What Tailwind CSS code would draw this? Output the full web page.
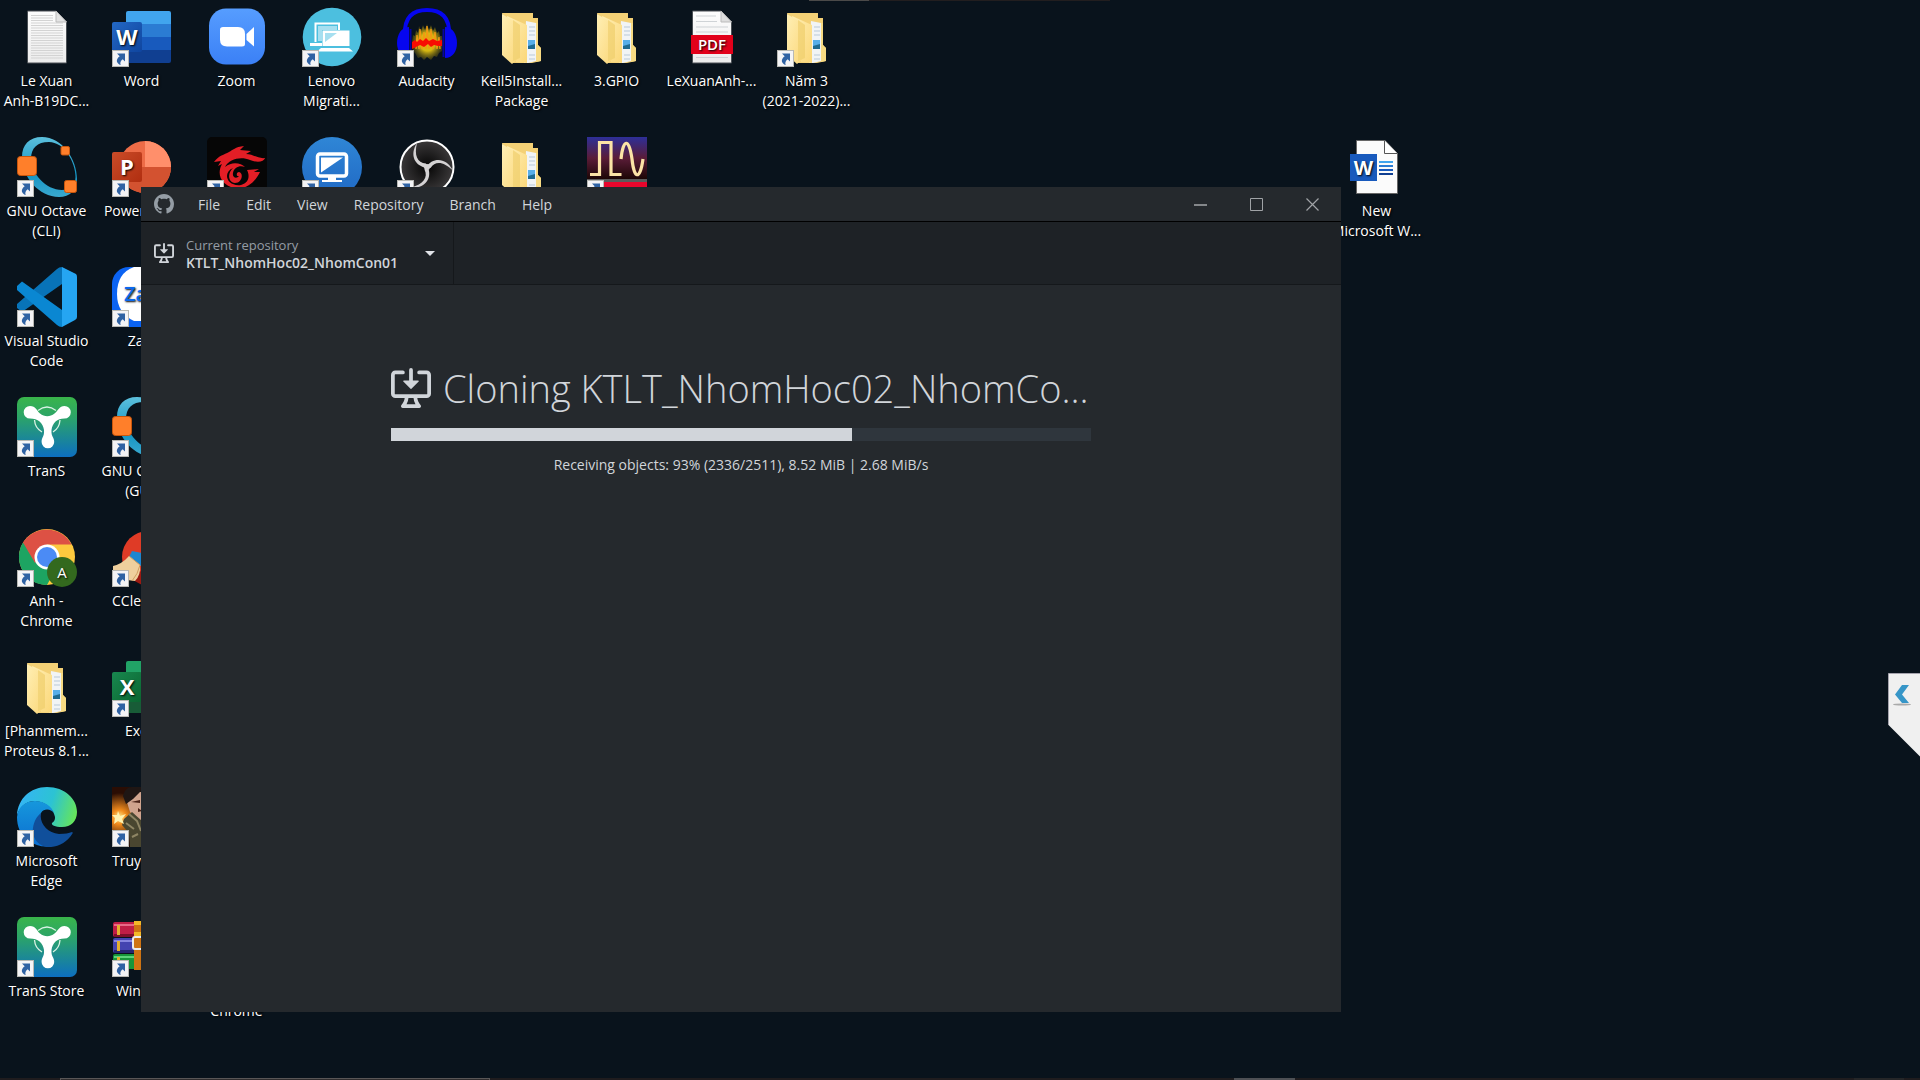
<!DOCTYPE html>
<html lang="en">
<head>
<meta charset="utf-8">
<meta name="viewport" content="width=device-width, initial-scale=1">
<title>Cloning KTLT_NhomHoc02_NhomCon01</title>
<script src="https://cdn.jsdelivr.net/npm/@tailwindcss/browser@4"></script>
</head>
<body class="relative h-screen overflow-hidden bg-[#09131c] font-['Open_Sans','Noto_Sans',sans-serif] text-sm">

<!-- Shared icon artwork -->
<svg class="absolute size-0" aria-hidden="true">
  <defs>
    <linearGradient id="gFold" x1="0" y1="0" x2="1" y2="1"><stop offset="0" stop-color="#ffefb5"/><stop offset="1" stop-color="#fbd778"/></linearGradient>
    <linearGradient id="gZoom" x1="0" y1="0" x2="0" y2="1"><stop offset="0" stop-color="#569dff"/><stop offset="1" stop-color="#3b80f6"/></linearGradient>
    <linearGradient id="gOct" x1="0" y1="0" x2="0" y2="1"><stop offset="0" stop-color="#5cc0dd"/><stop offset=".6" stop-color="#1494c3"/><stop offset="1" stop-color="#3aa9d0"/></linearGradient>
    <linearGradient id="gTran" x1="0" y1="0" x2="0" y2="1"><stop offset="0" stop-color="#39b54a"/><stop offset=".35" stop-color="#2ba36a"/><stop offset="1" stop-color="#0d6fc0"/></linearGradient>
    <linearGradient id="gWord" x1="0" y1="0" x2="1" y2="1"><stop offset="0" stop-color="#2368c4"/><stop offset="1" stop-color="#0f459f"/></linearGradient>
    <linearGradient id="gPpt" x1="0" y1="0" x2="1" y2="1"><stop offset="0" stop-color="#ca4c28"/><stop offset="1" stop-color="#b02e10"/></linearGradient>
    <linearGradient id="gXls" x1="0" y1="0" x2="1" y2="1"><stop offset="0" stop-color="#18884f"/><stop offset="1" stop-color="#0b6631"/></linearGradient>
    <linearGradient id="gSig" x1="0" y1="0" x2="0" y2="1"><stop offset="0" stop-color="#2e2f98"/><stop offset=".5" stop-color="#5a1c38"/><stop offset="1" stop-color="#1c0605"/></linearGradient>
    <linearGradient id="gBlue" x1="0" y1="0" x2="0" y2="1"><stop offset="0" stop-color="#2f86d6"/><stop offset="1" stop-color="#2069c4"/></linearGradient>
    <linearGradient id="gPage" x1="0" y1="0" x2="0" y2="1"><stop offset="0" stop-color="#fdfdfd"/><stop offset="1" stop-color="#ececec"/></linearGradient>
    <radialGradient id="gObs"><stop offset="0" stop-color="#050505"/><stop offset="1" stop-color="#3a3839"/></radialGradient>
    <radialGradient id="gAud"><stop offset=".5" stop-color="#d6b812"/><stop offset="1" stop-color="#5d5510" stop-opacity=".5"/></radialGradient>
    <linearGradient id="gEdgeT" x1="0" y1=".4" x2="1" y2=".6"><stop offset="0" stop-color="#35b4f5"/><stop offset=".55" stop-color="#2cc3d3"/><stop offset="1" stop-color="#66e55a"/></linearGradient>
    <linearGradient id="gEdgeB" x1="0" y1="0" x2="0" y2="1"><stop offset="0" stop-color="#1697dc"/><stop offset="1" stop-color="#0b6ed0"/></linearGradient>
    <radialGradient id="gFire" cx=".12" cy=".5" r=".4"><stop offset="0" stop-color="#ffe98a"/><stop offset=".3" stop-color="#f08a1c"/><stop offset="1" stop-color="#2a0d04"/></radialGradient>

    <symbol id="badge" viewBox="0 0 17 17">
      <rect x=".5" y=".5" width="16" height="16" fill="#f4f4f6" stroke="#b9b9b4"/>
      <path d="M5 3.500H13V11.500L10.700 9.200C8.500 11 7.800 12.600 8.700 15C4.700 13.500 3 9.700 7.700 6.200Z" fill="#2f62a3"/>
    </symbol>
    <symbol id="folder" viewBox="0 0 60 60">
      <path d="M10 6H41V11H46V38L49 41V54L40 56H20Z" fill="#f4d176"/>
      <path d="M34 14L44 16V54L36 56H32Z" fill="#f1f4f6"/>
      <path d="M37 20h6M37 24h6M37 28h6M37 48h6M37 52h6" stroke="#b9c9d8"/>
      <path d="M36 33h7v9h-7z" fill="#58aee8"/><path d="M36 39l7-2v5h-7z" fill="#1f6b91"/>
      <path d="M15 9L35 18V56L24 55Z" fill="url(#gFold)"/>
      <path d="M10 7L28 18V50L20 57L10 48Z" fill="url(#gFold)"/>
      <path d="M21 13L28 18V51L21 54Z" fill="#f0d070" opacity=".7"/>
      <path d="M44 16H46V38L49 41V54L44 55Z" fill="#f8db83"/>
    </symbol>
    <symbol id="octave" viewBox="0 0 60 60">
      <path fill="url(#gOct)" fill-rule="evenodd" d="M25 0C45 0 60 22 60 42C60 53 53 60 42 60C22 60 5 40 5 20C5 8 12 0 25 0ZM32 5C20 5 14 11 14 22C14 36 29 53 45 53C53 53 58.500 48 58.500 40C58.500 25 47 5 32 5Z"/>
      <g fill="#ff7f2a" stroke="#c9560c"><rect x=".5" y="19.500" width="19" height="19" rx="3"/><rect x="44" y="9.500" width="8.500" height="8.500" rx="1.500"/><rect x="47.500" y="43.500" width="12" height="12" rx="2"/></g>
    </symbol>
    <symbol id="trans" viewBox="0 0 60 60">
      <rect width="60" height="60" rx="7" fill="url(#gTran)"/>
      <path d="M21 13.500Q30 6.500 39 13.500M17.500 23Q18 31 25 35M43 23Q42.500 31 36 35" fill="none" stroke="#d9f2e4" stroke-width="1.300"/>
      <path d="M13 9C19 9 19 13 23 16.500C27.500 20 33 20 37.500 16.500C42 13 42 9 47.500 9A6.300 6.300 0 0 1 47.500 21.600C40 21.600 35.500 26 34.500 33C34 40 37.200 40 37.200 45A6.300 6.300 0 0 1 24.600 45C24.600 40 27.500 40 27 33C26 26 21 21.600 13 21.600A6.300 6.300 0 0 1 13 9Z" fill="#fff"/>
    </symbol>
    <symbol id="clone" viewBox="0 0 16 16">
      <path d="M4.927 5.427l2.896 2.896a.25.25 0 00.354 0l2.896-2.896A.25.25 0 0010.896 5H8.750V.750a.75.75 0 10-1.500 0V5H5.104a.25.25 0 00-.177.427z"/>
      <path d="M1.573 2.573a.25.25 0 00-.073.177v7.500a.25.25 0 00.25.25h12.500a.25.25 0 00.25-.25v-7.500a.25.25 0 00-.25-.25h-3a.75.75 0 110-1.500h3A1.750 1.750 0 0116 2.750v7.500A1.750 1.750 0 0114.250 12h-3.727c.099 1.041.52 1.872 1.292 2.757A.75.75 0 0111.250 16h-6.500a.75.75 0 01-.565-1.243c.772-.885 1.192-1.716 1.292-2.757H1.750A1.750 1.750 0 010 10.250v-7.500A1.750 1.750 0 011.750 1h3a.75.75 0 010 1.500h-3a.25.25 0 00-.177.073zM6.982 12a5.720 5.720 0 01-.765 2.500h3.566a5.720 5.720 0 01-.765-2.500H6.982z"/>
    </symbol>
  </defs>
</svg>

<!-- Desktop shortcuts -->
<main class="-ml-px grid auto-rows-[130px] grid-cols-[repeat(auto-fill,95px)] pt-[7px] text-center leading-5 text-white [text-shadow:1px_1px_2px_#000]">
  <a href="#" class="col-start-1 row-start-1 flex flex-col items-center gap-1">
    <svg class="size-15" viewBox="0 0 60 60"><path d="M10.500 4H39L49.500 14.500V56H10.500Z" fill="url(#gPage)" stroke="#4a4f54"/><path d="M14 8.500h22M14 11h22M14 13.500h22M14 16h32M14 18.500h32M14 21h32M14 23.500h32M14 26h32M14 28.500h32M14 31h32M14 33.500h32M14 36h32M14 38.500h32M14 41h32M14 43.500h32M14 46h32M14 48.500h32M14 51h32" stroke="#d3d3d3"/><path d="M39 4V15H49.500Z" fill="#e3e3e3" stroke="#bbb"/></svg>
    <span>Le Xuan<br>Anh-B19DC...</span></a>
  <a href="#" class="col-start-2 row-start-1 flex flex-col items-center gap-1">
    <svg class="size-15" viewBox="0 0 60 60"><path d="M14 17V6Q14 4 16 4H57Q59 4 59 6V17Z" fill="#41a5ee"/><path d="M14 17H59V30H14Z" fill="#2b7cd3"/><path d="M14 30H59V43H14Z" fill="#185abd"/><path d="M14 43H59V54Q59 56 57 56H14Z" fill="#103f91"/><rect y="15" width="30" height="30" rx="2" fill="url(#gWord)"/><text x="15" y="38" font-size="22" font-weight="700" text-anchor="middle" fill="#fff">W</text><use href="#badge" y="43" width="17" height="17"/></svg>
    <span>Word</span></a>
  <a href="#" class="col-start-3 row-start-1 flex flex-col items-center gap-1">
    <svg class="size-15" viewBox="0 0 60 60"><rect x="2" y="1.500" width="56" height="56" rx="17" fill="url(#gZoom)"/><path d="M13 22.500Q13 20 16 20H31Q38 20 38 27V37Q38 39.500 35 39.500H20Q13 39.500 13 32.500Z" fill="#fff"/><path d="M39.500 27L47 20V39.500L39.500 33Z" fill="#fff"/></svg>
    <span>Zoom</span></a>
  <a href="#" class="col-start-4 row-start-1 flex flex-col items-center gap-1">
    <svg class="size-15" viewBox="0 0 60 60"><circle cx="30" cy="30" r="29.300" fill="#4cbfdf"/><path d="M13.500 35V16.500H37V23" fill="none" stroke="#fff" stroke-width="2"/><path d="M16 19H35V23H20V34H16Z" fill="#a6dff0"/><path d="M8 36h12v3H8z" fill="#fff"/><path d="M20.500 23.500H47.500V39H20.500ZM19 41H47L51 44.500H15Z" fill="#fff"/><path d="M23 26H35L23 35Z" fill="#a6dff0"/><use href="#badge" y="43" width="17" height="17"/></svg>
    <span>Lenovo<br>Migrati...</span></a>
  <a href="#" class="col-start-5 row-start-1 flex flex-col items-center gap-1">
    <svg class="size-15" viewBox="0 0 60 60"><path d="M15 34L16 28L18 29L19 23L21 26L22 19L24 24L26 18L28 23L30 17L32 23L34 18L36 24L38 20L40 26L42 24L43 29L45 29L46 36L45 44L42 46L40 50L37 49L34 53L30 50L27 53L24 50L21 51L18 46L16 44Z" fill="url(#gAud)"/><path d="M19 42L20 28L22 42L23 22L25 42L27 25L29 42L30 19L32 42L34 22L36 42L38 25L40 42L42 30L43 42" stroke="#f29a12" stroke-width="1.300" fill="none"/><path d="M15 35L18 33L20 35L23 32L26 34L29 31L32 34L36 32L40 34L45 33V39L41 39L37 38L34 40L31 37L27 40L23 38L19 40L15 42Z" fill="#f80b02"/><path d="M8 28C7 10 16 3 30 3S53 10 52 28" fill="none" stroke="#0606ef" stroke-width="4"/><path d="M12 20C4 20 0 28 0 36S5 51 12 51ZM48 20C56 20 60 28 60 36S56 51 48 51Z" fill="#0606ef"/><path d="M13.500 22V50M46.500 22V50" stroke="#0505a0" stroke-width="2"/><use href="#badge" y="43" width="17" height="17"/></svg>
    <span>Audacity</span></a>
  <a href="#" class="col-start-6 row-start-1 flex flex-col items-center gap-1">
    <svg class="size-15"><use href="#folder"/></svg>
    <span>Keil5Install...<br>Package</span></a>
  <a href="#" class="col-start-7 row-start-1 flex flex-col items-center gap-1">
    <svg class="size-15"><use href="#folder"/></svg>
    <span>3.GPIO</span></a>
  <a href="#" class="col-start-8 row-start-1 flex flex-col items-center gap-1">
    <svg class="size-15" viewBox="0 0 60 60"><path d="M10.500 4H39L49.500 14.500V56H10.500Z" fill="url(#gPage)" stroke="#4a4f54"/><path d="M14 9h20M14 14.500h21M14 20h32M14 25h32M14 50.500h32" stroke="#cfd3d6"/><path d="M39 4V15H49.500Z" fill="#dedede" stroke="#bbb"/><path d="M9 28H51V47H9Z" fill="#e2001a"/><text x="30" y="43" font-size="15" font-weight="600" text-anchor="middle" fill="#fff">PDF</text></svg>
    <span>LeXuanAnh-...</span></a>
  <a href="#" class="col-start-9 row-start-1 flex flex-col items-center gap-1">
    <svg class="size-15" viewBox="0 0 60 60"><use href="#folder"/><use href="#badge" y="43" width="17" height="17"/></svg>
    <span>Năm 3<br>(2021-2022)...</span></a>

  <a href="#" class="col-start-1 row-start-2 flex flex-col items-center gap-1">
    <svg class="size-15" viewBox="0 0 60 60"><use href="#octave"/><use href="#badge" y="43" width="17" height="17"/></svg>
    <span>GNU Octave<br>(CLI)</span></a>
  <a href="#" class="col-start-2 row-start-2 flex flex-col items-center gap-1">
    <svg class="size-15" viewBox="0 0 60 60"><circle cx="33" cy="30" r="26" fill="#ed6c47"/><path d="M33 4A26 26 0 0 1 59 30H33Z" fill="#ff8f6b"/><path d="M7 30H59A26 26 0 0 1 7 30Z" fill="#d35230"/><rect y="15" width="30" height="30" rx="2" fill="url(#gPpt)"/><text x="15" y="38" font-size="22" font-weight="700" text-anchor="middle" fill="#fff">P</text><use href="#badge" y="43" width="17" height="17"/></svg>
    <span>PowerPoint</span></a>
  <a href="#" aria-label="Garena" class="col-start-3 row-start-2 flex flex-col items-center">
    <svg class="size-15" viewBox="0 0 60 60"><rect width="60" height="60" rx="5" fill="#060606"/><path d="M7 25C12 18 17 18 22 15C26 13 28 10 37 9L33 13L44 14L39 17C46 17 51 22 58 21C57 25 50 26 43 23C34 19 22 22 18 30C25 24 34 26 38 30C33 28 27 30 26 36C25 41 30 42 32 39C29 40 29 35 32 35C37 36 35 46 28 46C20 45 21 35 26 31C15 36 20 50 34 48C42 46 43 39 40 33L52 32L47 35L53 35C48 45 40 53 27 51C15 48 9 38 15 27L11 29L14 24Z" fill="#e31e26"/><use href="#badge" y="43" width="17" height="17"/></svg></a>
  <a href="#" aria-label="Remote desktop" class="col-start-4 row-start-2 flex flex-col items-center">
    <svg class="size-15" viewBox="0 0 60 60"><circle cx="30" cy="30" r="30" fill="url(#gBlue)"/><rect x="15.500" y="17" width="29" height="22" rx="2.500" fill="none" stroke="#fff" stroke-width="3.500"/><path d="M19 20.500H41L19 35.500Z" fill="#fff"/><path d="M26 40h8v3h6v2H20v-2h6z" fill="#fff"/><use href="#badge" y="43" width="17" height="17"/></svg></a>
  <a href="#" aria-label="OBS Studio" class="col-start-5 row-start-2 flex flex-col items-center">
    <svg class="size-15" viewBox="0 0 60 60"><circle cx="30" cy="30" r="26.500" fill="url(#gObs)" stroke="#fff" stroke-width="2"/><g fill="#d4d2d3"><path d="M20 6C17 18 20 26 29 26.500L31 31C18 30 12 18 20 6Z"/><path d="M20 6C17 18 20 26 29 26.500L31 31C18 30 12 18 20 6Z" transform="rotate(120 30 30)"/><path d="M20 6C17 18 20 26 29 26.500L31 31C18 30 12 18 20 6Z" transform="rotate(240 30 30)"/><circle cx="30" cy="30" r="3"/></g><use href="#badge" y="43" width="17" height="17"/></svg></a>
  <a href="#" aria-label="Folder" class="col-start-6 row-start-2 flex flex-col items-center">
    <svg class="size-15"><use href="#folder"/></svg></a>
  <a href="#" aria-label="Signal tool" class="col-start-7 row-start-2 flex flex-col items-center">
    <svg class="size-15" viewBox="0 0 60 60"><path d="M0 0H60V42H0Z" fill="url(#gSig)"/><path d="M0 42H60V45H0Z" fill="#5b5b5b"/><path d="M0 45H60V60H0Z" fill="#e8062c"/><path d="M3 37.500H12.500V5.500H24V37.500H34.500" fill="none" stroke="#fbe3a6" stroke-width="3.200"/><path d="M34 22C36 2 42 0 45 22C47 42 53 44 56 22" fill="none" stroke="#fbe3a6" stroke-width="3.200"/><use href="#badge" y="43" width="17" height="17"/></svg></a>
  <a href="#" class="col-start-15 row-start-2 flex flex-col items-center gap-1">
    <svg class="size-15" viewBox="0 0 60 60"><path d="M9.500 3.500H38L50.500 16.500V56.500H9.500Z" fill="#fbfbfb" stroke="#666"/><path d="M37.500 3.500V16.500H50.500" fill="#fff" stroke="#555"/><path d="M3 17H30V44H3Z" fill="#185abd"/><text x="16.500" y="38" font-size="20" font-weight="700" text-anchor="middle" fill="#fff">W</text><path d="M32 25h14" stroke="#41a5ee" stroke-width="2"/><path d="M32 29h14" stroke="#2b7cd3" stroke-width="2"/><path d="M32 33h14" stroke="#185abd" stroke-width="2"/><path d="M32 37h14" stroke="#103f91" stroke-width="2"/></svg>
    <span>New<br>Microsoft W...</span></a>

  <a href="#" class="col-start-1 row-start-3 flex flex-col items-center gap-1">
    <svg class="size-15" viewBox="0 0 60 60"><path d="M45 0V17L5 45L0 41V37L40 2Q42 0 45 0Z" fill="#0873b8"/><path d="M0 19L5 14.500L45 43V60Q42 60 40 58L0 23Z" fill="#0a87d2"/><path d="M45 0L59 7Q60 8 60 10V50Q60 52 58 53L45 60Z" fill="#25a5f2"/><use href="#badge" y="43" width="17" height="17"/></svg>
    <span>Visual Studio<br>Code</span></a>
  <a href="#" class="col-start-2 row-start-3 flex flex-col items-center gap-1">
    <svg class="size-15" viewBox="0 0 60 60"><rect width="60" height="60" rx="17" fill="#0b63f3"/><path d="M22 0H60V54H22Q5 46 5 27Q5 6 22 0Z" fill="#fff"/><text x="12" y="34" font-size="20" font-weight="600" fill="#0b68ee">Zalo</text><use href="#badge" y="43" width="17" height="17"/></svg>
    <span>Zalo</span></a>

  <a href="#" class="col-start-1 row-start-4 flex flex-col items-center gap-1">
    <svg class="size-15" viewBox="0 0 60 60"><use href="#trans"/><use href="#badge" y="43" width="17" height="17"/></svg>
    <span>TranS</span></a>
  <a href="#" class="col-start-2 row-start-4 flex flex-col items-center gap-1">
    <svg class="size-15" viewBox="0 0 60 60"><use href="#octave"/><use href="#badge" y="43" width="17" height="17"/></svg>
    <span>GNU Octave<br>(GUI)</span></a>

  <a href="#" class="col-start-1 row-start-5 flex flex-col items-center gap-1">
    <svg class="size-15" viewBox="0 0 60 60"><circle cx="30" cy="30" r="28" fill="#fdc93e"/><path d="M30 30L6 15.500A28 28 0 0 0 30 58L42 36Z" fill="#1da462"/><path d="M6 15.500A28 28 0 0 1 54.500 17.500H30L18 36Z" fill="#dd5144"/><circle cx="30" cy="30" r="12.500" fill="#fff"/><circle cx="30" cy="30" r="10" fill="#4b8bf5"/><circle cx="45" cy="45" r="15" fill="#33691e"/><text x="45" y="50.500" font-size="15" text-anchor="middle" fill="#fff">A</text><use href="#badge" y="43" width="17" height="17"/></svg>
    <span>Anh -<br>Chrome</span></a>
  <a href="#" class="col-start-2 row-start-5 flex flex-col items-center gap-1">
    <svg class="size-15" viewBox="0 0 60 60"><circle cx="36" cy="30" r="26" fill="#df3b26"/><path d="M19 47L30 44V58L19 52Z" fill="#9c1a12"/><path d="M17 30L20 24L30 26V40Z" fill="#1d86cf"/><path d="M1 39Q10 37 17 29L28 38Q29 48 23 54L15 53L1 44Z" fill="#efcf9d"/><path d="M17 29L28 38Q26 47 20 54" fill="none" stroke="#cf9d60"/><use href="#badge" y="43" width="17" height="17"/></svg>
    <span>CCleaner</span></a>

  <a href="#" class="col-start-1 row-start-6 flex flex-col items-center gap-1">
    <svg class="size-15"><use href="#folder"/></svg>
    <span>[Phanmem...<br>Proteus 8.1...</span></a>
  <a href="#" class="col-start-2 row-start-6 flex flex-col items-center gap-1">
    <svg class="size-15" viewBox="0 0 60 60"><path d="M14 30V6Q14 4 16 4H59V30Z" fill="#21a366"/><path d="M14 17H59V43H14Z" fill="#107c41"/><path d="M14 43H59V56H14Z" fill="#185c37"/><rect y="15" width="30" height="30" rx="2" fill="url(#gXls)"/><text x="15" y="38" font-size="22" font-weight="700" text-anchor="middle" fill="#fff">X</text><use href="#badge" y="43" width="17" height="17"/></svg>
    <span>Excel</span></a>

  <a href="#" class="col-start-1 row-start-7 flex flex-col items-center gap-1">
    <svg class="size-15" viewBox="0 0 60 60"><path d="M0 28C1 12 13 0 30 0C48 0 60 12 60 25C60 34 54 40 45 40C38 40 34 38 35 36C38 34 38 32 38 30C37 24 31 15 18 14C9 14 3 20 0 28Z" fill="url(#gEdgeT)"/><path d="M0 30C1 20 8 14 18 14C28 14 35 20 37 26C34 22 27 21 24 26C20 36 24 52 44 56C32 62 20 60 12 54C3 48 0 39 0 30Z" fill="url(#gEdgeB)"/><path d="M24 26C22 36 30 46 42 47C48 47 52 46 55 45Q56 45 55.500 46.500C50 56 39 61 29 60C18 57 15 48 16 41C17 34 20 29 24 26Z" fill="#104f9b"/><use href="#badge" y="43" width="17" height="17"/></svg>
    <span>Microsoft<br>Edge</span></a>
  <a href="#" class="col-start-2 row-start-7 flex flex-col items-center gap-1">
    <svg class="size-15" viewBox="0 0 60 60"><path d="M0 0H60V60H0Z" fill="url(#gFire)"/><path d="M18 30H60V60H20Z" fill="#3b2a1a"/><path d="M14 12L24 4H60V34H27L18 25Z" fill="#d0a48e"/><path d="M11 9Q13 0 20 0H60V8L28 5L21 12L14 17Z" fill="#1f1614"/><path d="M19 15L28 13V16ZM26 21L30 24L26 25Z" fill="#4b2318"/><path d="M12 32L20 25L30 34V60H18L17 46L10 38Z" fill="#494630"/><path d="M17 27L25 34L29 44M14 36L22 42M20 50L26 47" stroke="#8e8564" stroke-width="2" fill="none"/><path d="M6 24L8 29L14 27L10 32L12 37L6 34L2 37L3 31L0 28L5 28Z" fill="#fff3b0"/><use href="#badge" y="43" width="17" height="17"/></svg>
    <span>Truy kích</span></a>

  <a href="#" class="col-start-1 row-start-8 flex flex-col items-center gap-1">
    <svg class="size-15" viewBox="0 0 60 60"><use href="#trans"/><use href="#badge" y="43" width="17" height="17"/></svg>
    <span>TranS Store</span></a>
  <a href="#" class="col-start-2 row-start-8 flex flex-col items-center gap-1">
    <svg class="size-15" viewBox="0 0 60 60"><rect x="1" y="5" width="58" height="15" rx="2" fill="#c01e46"/><path d="M2 7h56v2H2z" fill="#e66a88"/><path d="M2 17h56v3H2z" fill="#7d0f2a"/><rect x="1" y="21" width="58" height="15" rx="2" fill="#4444b0"/><path d="M2 23h56v2H2z" fill="#8686e0"/><path d="M2 33h56v3H2z" fill="#26266f"/><rect x="1" y="37" width="58" height="15" rx="2" fill="#17963a"/><path d="M2 39h56v2H2z" fill="#5cd47a"/><path d="M5 8h3v10H5zM5 24h3v10H5zM5 40h3v10H5z" fill="#e3b02f"/><path d="M22 4h16v49H22z" fill="#cf7413"/><path d="M22 4h16v4H22zM22 15h16v4H22z" fill="#f2b928"/><rect x="21" y="20" width="18" height="12" rx="2" fill="none" stroke="#ececec" stroke-width="2"/><use href="#badge" y="43" width="17" height="17"/></svg>
    <span>WinRAR</span></a>
  <a href="#" class="col-start-3 row-start-8 flex flex-col items-center gap-1">
    <svg class="size-15" viewBox="0 0 60 60"><circle cx="30" cy="30" r="28" fill="#fdc93e"/><circle cx="30" cy="30" r="10" fill="#4b8bf5"/></svg>
    <span><br>Chrome</span></a>
</main>

<!-- Application window -->
<section aria-label="GitHub Desktop" class="absolute top-[187px] left-[141px] flex h-[825px] w-[1200px] flex-col bg-[#25292d] text-[#d1d5da]">
  <header class="flex h-[35px] shrink-0 items-stretch border-b border-black pr-px">
    <svg class="mr-[11px] ml-[13px] size-5 self-center fill-[#959da5]" viewBox="0 0 16 16" aria-hidden="true"><path d="M8 0C3.580 0 0 3.580 0 8c0 3.540 2.290 6.530 5.470 7.590.4.070.55-.17.55-.38 0-.19-.01-.82-.01-1.490-2.010.37-2.530-.49-2.690-.94-.09-.23-.48-.94-.82-1.130-.28-.15-.68-.52-.01-.53.63-.01 1.080.58 1.230.82.72 1.210 1.870.87 2.330.66.070-.52.28-.87.51-1.070-1.780-.2-3.640-.89-3.640-3.950 0-.87.31-1.590.82-2.150-.08-.2-.36-1.020.08-2.120 0 0 .67-.21 2.200.82.64-.18 1.320-.27 2-.27s1.360.09 2 .27c1.530-1.040 2.200-.82 2.200-.82.44 1.100.16 1.920.08 2.120.51.56.82 1.270.82 2.150 0 3.070-1.870 3.750-3.650 3.950.29.25.54.73.54 1.480 0 1.070-.01 1.930-.01 2.200 0 .21.15.46.55.38A8.010 8.010 0 0 0 16 8c0-4.420-3.580-8-8-8z"/></svg>
    <nav class="flex flex-1 pt-0.5">
      <button class="px-[13px]">File</button>
      <button class="px-[13px]">Edit</button>
      <button class="px-[13px]">View</button>
      <button class="px-[13px]">Repository</button>
      <button class="px-[13px]">Branch</button>
      <button class="px-[13px]">Help</button>
    </nav>
    <button class="flex w-14 items-center justify-center" aria-label="Minimize"><svg class="h-[13px] w-[13px]" viewBox="0 0 13 13"><path d="M0 6h13v2H0z" fill="#84878a"/></svg></button>
    <button class="flex w-14 items-center justify-center" aria-label="Maximize"><svg class="h-[13px] w-[13px]" viewBox="0 0 13 13"><path d="M.5.5h12v12H.5z" fill="none" stroke="#a0a3a6"/></svg></button>
    <button class="flex w-14 items-center justify-center" aria-label="Close"><svg class="h-[13px] w-[13px]" viewBox="0 0 13 13"><path d="M.5.5l12 12M12.500.5l-12 12" fill="none" stroke="#a0a3a6" stroke-width="1.200"/></svg></button>
  </header>
  <div class="flex h-[63px] shrink-0 border-b border-[#15181b] bg-[#1e2226]">
    <button class="flex w-[313px] items-center border-r border-[#15181b] pr-[18px] pl-[13px] text-left">
      <svg class="size-5 fill-[#d1d5da]" aria-hidden="true"><use href="#clone"/></svg>
      <span class="ml-3 flex flex-1 flex-col pt-px leading-[18px]">
        <span class="text-[13px] text-[#959da5]">Current repository</span>
        <span class="font-semibold">KTLT_NhomHoc02_NhomCon01</span>
      </span>
      <svg class="h-[5px] w-[10px]" viewBox="0 0 10 5" aria-hidden="true"><path d="M0 0h10L5 5z" fill="#e1e4e8"/></svg>
    </button>
  </div>
  <div class="mx-auto flex w-[700px] flex-col pt-[76px]">
    <h1 class="flex items-center gap-3 text-[38px] leading-[54px] font-light whitespace-nowrap">
      <svg class="size-10 shrink-0 fill-[#d1d5da]" aria-hidden="true"><use href="#clone"/></svg>
      <span>Cloning KTLT_NhomHoc02_NhomCo...</span>
    </h1>
    <progress value="65.900" max="100" aria-label="Clone progress" class="mt-[13px] block h-[13px] w-full appearance-none bg-[#2f363d] [&::-webkit-progress-bar]:bg-[#2f363d] [&::-webkit-progress-value]:bg-[#d1d5da]"></progress>
    <p class="mt-3 text-center leading-6">Receiving objects: 93% (2336/2511), 8.52 MiB | 2.68 MiB/s</p>
  </div>
</section>

<!-- Edges of the hidden top bar and auto-hide taskbar -->
<div class="absolute top-0 left-[809px] flex h-px w-[301px] bg-[#221e1f]"><div class="w-15 bg-[#4b4a49]"></div></div>
<footer class="absolute inset-x-0 bottom-0 flex h-0.5 bg-[#1f1c1e]">
  <div class="ml-15 w-[430px] border border-b-0 border-[#5a5757] bg-[#2f2c2d]"></div>
  <div class="ml-[744px] w-[61px] bg-[#4e5054]"></div>
  <div class="mr-[16px] ml-auto w-[50px] bg-[#252628]"></div>
</footer>

<!-- Side drawer handle -->
<button aria-label="Open drawer" class="absolute top-[673px] right-0">
  <svg class="h-[84px] w-8" viewBox="0 0 32 84"><path d="M.5.5H32V83.500L.5 52Z" fill="#f0f0f0"/><path d="M.5 52V.5H32" fill="none" stroke="#a5a3ad"/><ellipse cx="14" cy="31.500" rx="9" ry="1" fill="#aaa"/><path d="M14 12H21L14 21.500L21 30H14L7 21.500Z" fill="#3796c8"/></svg>
</button>
</body>
</html>
